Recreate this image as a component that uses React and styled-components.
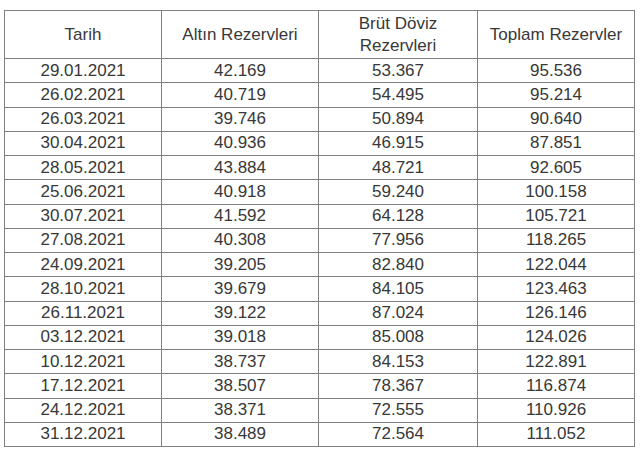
import React from "react";
import styled, { createGlobalStyle } from "styled-components";

const GlobalStyle = createGlobalStyle`
  html, body {
    margin: 0;
    padding: 0;
    background: #ffffff;
  }
  body {
    font-family: "Liberation Sans", Arial, sans-serif;
  }
`;

const Page = styled.div`
  width: 640px;
  height: 455px;
  padding: 10px 0 0 4px;
  box-sizing: border-box;
  background: #ffffff;
`;

const Table = styled.table`
  width: 631px;
  table-layout: fixed;
  border-collapse: collapse;
  color: #383838;
  font-size: 17px;
`;

const Col = styled.col`
  width: ${(p) => p.$w}px;
`;

const Head = styled.th`
  height: 47px;
  padding: 0 4px;
  border: 1px solid #7f7f7f;
  font-weight: normal;
  line-height: 22px;
  text-align: center;
  vertical-align: middle;
`;

const Cell = styled.td`
  height: 23.25px;
  padding: 0;
  border: 1px solid #7f7f7f;
  line-height: 20px;
  text-align: center;
  vertical-align: middle;
`;

const widths = [157, 157, 159, 157];

const rows = [
  ["29.01.2021", "42.169", "53.367", "95.536"],
  ["26.02.2021", "40.719", "54.495", "95.214"],
  ["26.03.2021", "39.746", "50.894", "90.640"],
  ["30.04.2021", "40.936", "46.915", "87.851"],
  ["28.05.2021", "43.884", "48.721", "92.605"],
  ["25.06.2021", "40.918", "59.240", "100.158"],
  ["30.07.2021", "41.592", "64.128", "105.721"],
  ["27.08.2021", "40.308", "77.956", "118.265"],
  ["24.09.2021", "39.205", "82.840", "122.044"],
  ["28.10.2021", "39.679", "84.105", "123.463"],
  ["26.11.2021", "39.122", "87.024", "126.146"],
  ["03.12.2021", "39.018", "85.008", "124.026"],
  ["10.12.2021", "38.737", "84.153", "122.891"],
  ["17.12.2021", "38.507", "78.367", "116.874"],
  ["24.12.2021", "38.371", "72.555", "110.926"],
  ["31.12.2021", "38.489", "72.564", "111.052"],
];

export default function App() {
  return (
    <Page>
      <GlobalStyle />
      <Table>
        <colgroup>
          {widths.map((w, i) => (
            <Col key={i} $w={w} />
          ))}
        </colgroup>
        <thead>
          <tr>
            <Head>Tarih</Head>
            <Head>Altın Rezervleri</Head>
            <Head>
              Brüt Döviz
              <br />
              Rezervleri
            </Head>
            <Head>Toplam Rezervler</Head>
          </tr>
        </thead>
        <tbody>
          {rows.map((r) => (
            <tr key={r[0]}>
              {r.map((v, i) => (
                <Cell key={i}>{v}</Cell>
              ))}
            </tr>
          ))}
        </tbody>
      </Table>
    </Page>
  );
}
